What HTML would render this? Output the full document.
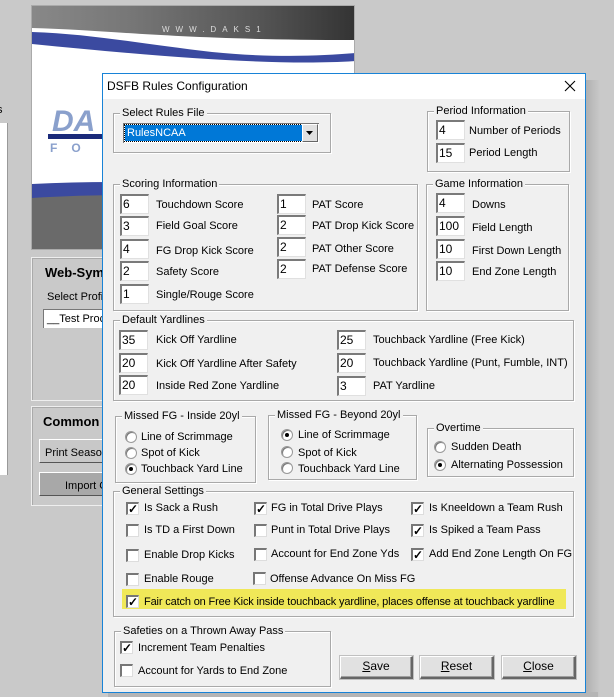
<!DOCTYPE html>
<html><head><meta charset="utf-8">
<style>
*{box-sizing:border-box;margin:0;padding:0}
body{width:614px;height:697px;overflow:hidden;background:#c9c9c9;font-family:"Liberation Sans",sans-serif;font-size:11px;color:#000;position:relative}
.a{position:absolute}
.t{position:absolute;white-space:nowrap;line-height:14px}
.g{position:absolute;border:1px solid #a9a9a9;box-shadow:inset 1px 1px #fff,1px 1px #fff}
.lg{position:absolute;top:-8px;left:6px;background:#f0f0f0;padding:0 2px;line-height:14px;white-space:nowrap}
.in{position:absolute;width:29px;height:20px;background:#fff;border-top:2px solid #7a7a7a;border-left:2px solid #7a7a7a;border-right:1px solid #e0e0e0;border-bottom:1px solid #e0e0e0;padding-left:1px;line-height:16px;font-size:12px}
.cb{position:absolute;width:13px;height:13px;background:#fff;border-top:2px solid #777;border-left:2px solid #777;border-right:1px solid #ddd;border-bottom:1px solid #ddd;font-size:12px;line-height:10px;text-align:center;font-weight:bold}
.rd{position:absolute;width:12px;height:12px;border-radius:50%;background:#fff;border:1px solid #999;box-shadow:inset 1px 1px #777}
.rd.on::after{content:"";position:absolute;left:3px;top:3px;width:4px;height:4px;border-radius:50%;background:#000}
.bt{position:absolute;height:23px;background:#e1e1e1;border:1px solid #fff;border-right:2px solid #666;border-bottom:2px solid #666;box-shadow:inset -1px -1px #a0a0a0,0 0 0 1px #c0c0c0;text-align:center;line-height:19px;font-size:12px}
</style></head><body>
<div class="a" style="left:0;top:123px;width:8px;height:352px;background:#fff;border-right:1px solid #999"></div>
<div class="t" style="left:-3px;top:103px">s</div>
<div class="a" style="left:31px;top:5px;width:324px;height:245px;background:#fff;border:1px solid #aaa;overflow:hidden">
 <div class="a" style="left:0;top:0;width:324px;height:40px;background:linear-gradient(90deg,#888,#777 30%,#555 70%,#333)"></div>
 <svg class="a" style="left:0;top:0" width="324" height="245">
  <path d="M0 22 C80 24 140 34 324 34 L324 60 L0 60Z" fill="#fff"/>
  <path d="M0 26 C60 28 110 38 180 46 C240 52 290 50 324 47 L324 55 C250 60 140 52 0 38Z" fill="#3b4aa0"/>
  <path d="M0 180 C100 176 220 186 324 196 L324 245 L0 245Z" fill="#6a6a6a"/>
  <path d="M0 178 C100 173 200 178 324 188 L324 198 C220 189 100 186 0 192Z" fill="#3b4aa0"/>
  <text x="20" y="125" font-family="Liberation Sans" font-size="30" font-style="italic" font-weight="bold" fill="#8aa0cc">DA</text>
  <rect x="16" y="128" width="60" height="5" fill="#1a2a7a"/>
  <text x="18" y="146" font-family="Liberation Sans" font-size="12" font-weight="bold" fill="#8aa0cc" letter-spacing="14">FO</text>
  <text x="130" y="26" font-family="Liberation Sans" font-size="8" fill="#ddd" letter-spacing="6">WWW.DAKS1</text>
 </svg>
</div>
<div class="a" style="left:31px;top:257px;width:80px;height:144px;border:1px solid #eee;box-shadow:inset 1px 1px #aaa"></div>
<div class="t" style="left:45px;top:266px;font-weight:bold;font-size:13px">Web-Sym</div>
<div class="t" style="left:47px;top:290px">Select Profil</div>
<div class="a" style="left:43px;top:309px;width:70px;height:19px;background:#fff;border-top:1px solid #777;border-left:1px solid #777"></div>
<div class="t" style="left:47px;top:312px">__Test Proc</div>
<div class="a" style="left:31px;top:406px;width:80px;height:100px;border:1px solid #eee;box-shadow:inset 1px 1px #aaa"></div>
<div class="t" style="left:43px;top:415px;font-weight:bold;font-size:13px">Common</div>
<div class="a" style="left:39px;top:439px;width:70px;height:24px;background:#c8c8c8;border:1px solid #fff;border-right:1px solid #555;border-bottom:1px solid #555"></div>
<div class="t" style="left:45px;top:446px">Print Seasor</div>
<div class="a" style="left:39px;top:472px;width:70px;height:24px;background:#a8a8a8;border:1px solid #fff;border-right:1px solid #555;border-bottom:1px solid #555"></div>
<div class="t" style="left:65px;top:479px">Import G</div>
<div class="a" style="left:586px;top:80px;width:14px;height:617px;background:linear-gradient(90deg,#b0b0b0,#c9c9c9)"></div>
<div class="a" style="left:108px;top:692px;width:490px;height:5px;background:#b5b5b5"></div>
<div class="a" style="left:102px;top:73px;width:484px;height:620px;background:#f0f0f0;border:1px solid #1883d7">
 <div class="a" style="left:0;top:0;width:482px;height:25px;background:#fff"></div>
 <div class="t" style="left:4px;top:5px;font-size:12px">DSFB Rules Configuration</div>
 <svg class="a" style="left:461px;top:6px" width="12" height="12"><path d="M1 1L11 11M11 1L1 11" stroke="#000" stroke-width="1.1"/></svg>
</div>
<div class="g" style="left:113px;top:113px;width:218px;height:40px"><span class="lg">Select Rules File</span></div>
<div class="a" style="left:123px;top:123px;width:196px;height:20px;background:#fff;border-top:1px solid #777;border-left:1px solid #777"></div>
<div class="a" style="left:125px;top:125px;width:177px;height:16px;background:#0078d7;outline:1px dotted #000"></div>
<div class="t" style="left:127px;top:126px;color:#fff">RulesNCAA</div>
<div class="a" style="left:302px;top:124px;width:16px;height:18px;background:#e1e1e1;border:1px solid #fff;border-right:1px solid #666;border-bottom:1px solid #666"></div>
<svg class="a" style="left:306px;top:131px" width="8" height="5"><path d="M0 0H7L3.5 4Z" fill="#000"/></svg>
<div class="g" style="left:427px;top:111px;width:143px;height:61px"><span class="lg">Period Information</span></div>
<div class="in" style="left:436px;top:120px">4</div><div class="t" style="left:469px;top:124px">Number of Periods</div>
<div class="in" style="left:436px;top:143px">15</div><div class="t" style="left:469px;top:146px">Period Length</div>
<div class="g" style="left:113px;top:184px;width:305px;height:127px"><span class="lg">Scoring Information</span></div>
<div class="in" style="left:120px;top:194px">6</div><div class="t" style="left:156px;top:198px">Touchdown Score</div>
<div class="in" style="left:120px;top:216px">3</div><div class="t" style="left:156px;top:219px">Field Goal Score</div>
<div class="in" style="left:120px;top:239px">4</div><div class="t" style="left:156px;top:244px">FG Drop Kick Score</div>
<div class="in" style="left:120px;top:261px">2</div><div class="t" style="left:156px;top:265px">Safety Score</div>
<div class="in" style="left:120px;top:284px">1</div><div class="t" style="left:156px;top:288px">Single/Rouge Score</div>
<div class="in" style="left:277px;top:194px">1</div><div class="t" style="left:312px;top:198px">PAT Score</div>
<div class="in" style="left:277px;top:215px">2</div><div class="t" style="left:312px;top:219px">PAT Drop Kick Score</div>
<div class="in" style="left:277px;top:237px">2</div><div class="t" style="left:312px;top:242px">PAT Other Score</div>
<div class="in" style="left:277px;top:259px">2</div><div class="t" style="left:312px;top:262px">PAT Defense Score</div>
<div class="g" style="left:426px;top:184px;width:143px;height:127px"><span class="lg">Game Information</span></div>
<div class="in" style="left:436px;top:193px">4</div><div class="t" style="left:472px;top:198px">Downs</div>
<div class="in" style="left:436px;top:216px">100</div><div class="t" style="left:472px;top:221px">Field Length</div>
<div class="in" style="left:436px;top:239px">10</div><div class="t" style="left:472px;top:244px">First Down Length</div>
<div class="in" style="left:436px;top:261px">10</div><div class="t" style="left:472px;top:265px">End Zone Length</div>
<div class="g" style="left:113px;top:320px;width:461px;height:81px"><span class="lg">Default Yardlines</span></div>
<div class="in" style="left:119px;top:330px">35</div><div class="t" style="left:156px;top:333px">Kick Off Yardline</div>
<div class="in" style="left:119px;top:353px">20</div><div class="t" style="left:156px;top:357px">Kick Off Yardline After Safety</div>
<div class="in" style="left:119px;top:375px">20</div><div class="t" style="left:156px;top:379px">Inside Red Zone Yardline</div>
<div class="in" style="left:337px;top:330px">25</div><div class="t" style="left:373px;top:333px">Touchback Yardline (Free Kick)</div>
<div class="in" style="left:337px;top:353px">20</div><div class="t" style="left:373px;top:356px">Touchback Yardline (Punt, Fumble, INT)</div>
<div class="in" style="left:337px;top:376px">3</div><div class="t" style="left:373px;top:379px">PAT Yardline</div>
<div class="g" style="left:115px;top:416px;width:141px;height:67px"><span class="lg">Missed FG - Inside 20yl</span></div>
<div class="rd" style="left:125px;top:431px"></div><div class="t" style="left:141px;top:430px">Line of Scrimmage</div>
<div class="rd" style="left:125px;top:447px"></div><div class="t" style="left:141px;top:446px">Spot of Kick</div>
<div class="rd on" style="left:125px;top:463px"></div><div class="t" style="left:141px;top:462px">Touchback Yard Line</div>
<div class="g" style="left:268px;top:415px;width:149px;height:65px"><span class="lg">Missed FG - Beyond 20yl</span></div>
<div class="rd on" style="left:281px;top:429px"></div><div class="t" style="left:298px;top:428px">Line of Scrimmage</div>
<div class="rd" style="left:281px;top:446px"></div><div class="t" style="left:298px;top:446px">Spot of Kick</div>
<div class="rd" style="left:281px;top:462px"></div><div class="t" style="left:298px;top:462px">Touchback Yard Line</div>
<div class="g" style="left:427px;top:428px;width:147px;height:49px"><span class="lg">Overtime</span></div>
<div class="rd" style="left:434px;top:441px"></div><div class="t" style="left:451px;top:440px">Sudden Death</div>
<div class="rd on" style="left:434px;top:459px"></div><div class="t" style="left:451px;top:458px">Alternating Possession</div>
<div class="g" style="left:113px;top:491px;width:461px;height:126px"><span class="lg">General Settings</span></div>
<div class="cb" style="left:126px;top:502px">✓</div><div class="t" style="left:144px;top:501px">Is Sack a Rush</div>
<div class="cb" style="left:126px;top:524px"></div><div class="t" style="left:144px;top:523px">Is TD a First Down</div>
<div class="cb" style="left:126px;top:549px"></div><div class="t" style="left:144px;top:548px">Enable Drop Kicks</div>
<div class="cb" style="left:126px;top:573px"></div><div class="t" style="left:144px;top:572px">Enable Rouge</div>
<div class="cb" style="left:254px;top:502px">✓</div><div class="t" style="left:271px;top:501px">FG in Total Drive Plays</div>
<div class="cb" style="left:254px;top:524px"></div><div class="t" style="left:271px;top:523px">Punt in Total Drive Plays</div>
<div class="cb" style="left:254px;top:548px"></div><div class="t" style="left:271px;top:547px">Account for End Zone Yds</div>
<div class="cb" style="left:253px;top:572px"></div><div class="t" style="left:270px;top:572px">Offense Advance On Miss FG</div>
<div class="cb" style="left:411px;top:502px">✓</div><div class="t" style="left:429px;top:501px">Is Kneeldown a Team Rush</div>
<div class="cb" style="left:411px;top:524px">✓</div><div class="t" style="left:429px;top:523px">Is Spiked a Team Pass</div>
<div class="cb" style="left:411px;top:548px">✓</div><div class="t" style="left:429px;top:547px">Add End Zone Length On FG</div>
<div class="a" style="left:122px;top:589px;width:444px;height:20px;background:#f0e858"></div>
<div class="cb" style="left:126px;top:595px">✓</div><div class="t" style="left:144px;top:595px;letter-spacing:-0.15px">Fair catch on Free Kick inside touchback yardline, places offense at touchback yardline</div>
<div class="g" style="left:114px;top:631px;width:217px;height:56px"><span class="lg">Safeties on a Thrown Away Pass</span></div>
<div class="cb" style="left:120px;top:641px">✓</div><div class="t" style="left:138px;top:641px">Increment Team Penalties</div>
<div class="cb" style="left:120px;top:664px"></div><div class="t" style="left:138px;top:664px">Account for Yards to End Zone</div>
<div class="bt" style="left:340px;top:656px;width:73px"><u>S</u>ave</div>
<div class="bt" style="left:420px;top:656px;width:74px"><u>R</u>eset</div>
<div class="bt" style="left:502px;top:656px;width:74px"><u>C</u>lose</div>
</body></html>
